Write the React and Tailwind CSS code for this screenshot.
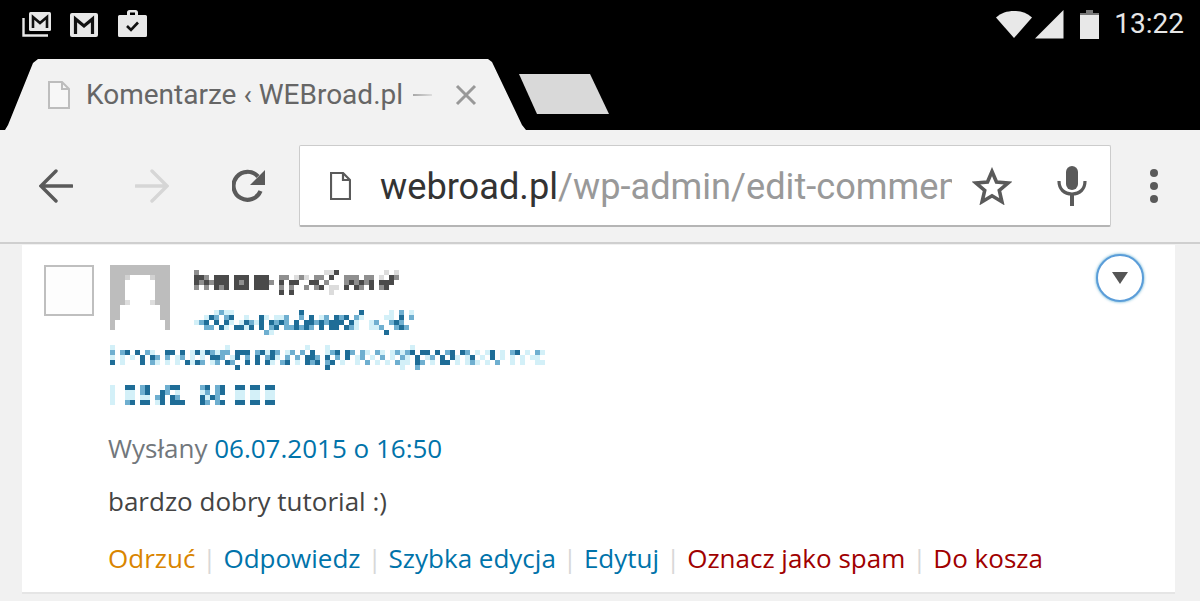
const sans = { fontFamily: "Roboto, sans-serif" };

// censored author details, one char per 5px block: # dark, + mid, - light
const nameRows = [
  "+.........................--#.........-.-",
  "##+.###.###.###..++.-+-.++.#..+++.++.-.#+",
  "#+#+###.#+#.###+.#.##..##.+...+#+#+#.###",
  "+.+.#+#.###.###..+.+..+.+#.--.#.#+.#.+#.",
  ".................#.#.......-............",
];
const siteRows = [
  "....-+--.............#...........#.....-.+.-.",
  "..-#+.+#..-..#-.--+..+.#.-+.#+#.+-....--.#.+.",
  "-+#.#.#-.-#+-#.#+#+.#.##+#+###.#-..-+..+#+...",
  "..++.#-.##-#.#.+#.++#+#+.#.##.#+-..--+..+#+..",
  "..............+-......................#......",
];
const mailRows = [
  "-......................-...............-...-................-...........................",
  "+.+#.#.+-..##.#.-#-#+-++.###.+#-#+.-+.+.#..-+#.#+.+-.+-.-+-+#.##.#.+#.#+.-.-#.-.+#.-.+-.",
  "-.-.-.#.#+.+.-+.-.-.##+.-#.+.#.+#-.+.+.##+.#.+.#.-+.-.+.-.+-.#.-+.#.#-.-#.-.#.-.-.-.--.",
  "#.-...#.+-.-.-.#-#+.-+.#+..#.#.#-.+#.-.#+#.+#.-..-.+.-.-.+--.#+.-.##.-.-+-.-.+..-.-..--.",
  ".........................#.................#..............-..+..........................",
];
const ipRows = [
  "-..##.+#...+##....+#.+#..##.##.##",
  "-..--.+#..#+.-....-+.+#..--.--.--",
  "-..--.--.+#.#+....#-#+...--.--.--",
  "-..+#.##.-#.###...#+.+#..##.##.##",
];

const greys = { "#": "#4a4a4a", "+": "#8f8f8f", "-": "#dcdcdc" };
const blues = { "#": "#1f6d97", "+": "#6fafd0", "-": "#d3f0f8" };

function Mosaic({ rows, palette }) {
  const cols = Math.max(...rows.map((r) => r.length));
  return (
    <svg width={cols * 5} height={rows.length * 5} shapeRendering="crispEdges" className="block">
      {rows.map((row, y) =>
        row.split("").map((ch, x) =>
          palette[ch] ? <rect key={y + "-" + x} x={x * 5} y={y * 5} width="5" height="5" fill={palette[ch]} /> : null
        )
      )}
    </svg>
  );
}

function GmailStack() {
  return (
    <svg width="30" height="30" viewBox="0 0 30 30">
      <path d="M1.500 9v17.500H26" fill="none" stroke="#e8e8e8" strokeWidth="2.400" />
      <rect x="7" y="3" width="22" height="19" rx="1.500" fill="#e8e8e8" />
      <path d="M11 19V8l7 6 7-6v11" fill="none" stroke="#111" strokeWidth="2.600" />
    </svg>
  );
}

function Gmail() {
  return (
    <svg width="28" height="30" viewBox="0 0 28 30">
      <rect x="0" y="4" width="28" height="24" rx="2" fill="#e8e8e8" />
      <path d="M5.500 25V10l8.500 7 8.500-7v15" fill="none" stroke="#111" strokeWidth="3.200" />
    </svg>
  );
}

function Briefcase() {
  return (
    <svg width="29" height="30" viewBox="0 0 29 30">
      <path d="M9 6V3.500C9 2 10 1 11.500 1h6C19 1 20 2 20 3.500V6h7.500A1.500 1.500 0 0 1 29 7.500v19a1.500 1.500 0 0 1-1.500 1.500h-26A1.500 1.500 0 0 1 0 26.500v-19A1.500 1.500 0 0 1 1.500 6zm3 0h5V3.500h-5z" fill="#e8e8e8" fillRule="evenodd" />
      <path d="M9 17l4 4 7-7.500" fill="none" stroke="#111" strokeWidth="2.600" />
    </svg>
  );
}

function StatusBar() {
  return (
    <div className="h-[59px] bg-black flex items-start justify-between pl-[22px] pr-[16px] pt-[9px]">
      <div className="flex items-center gap-[18px] h-[30px]">
        <GmailStack />
        <Gmail />
        <div className="ml-[2px]"><Briefcase /></div>
      </div>
      <div className="flex items-center h-[30px]">
        <svg width="36" height="28" viewBox="0 0 36 28" className="mr-[3px]">
          <path d="M0 7.500C5 3 11 1 18 1s13 2 18 6.500L18 28z" fill="#e8e8e8" />
        </svg>
        <svg width="29" height="29" viewBox="0 0 29 29" className="mr-[16px]">
          <path d="M0 28.500L28.500 0v28.500z" fill="#e8e8e8" />
        </svg>
        <svg width="19" height="29" viewBox="0 0 19 29" className="mr-[15px]">
          <path d="M6 0h7v3h6v26H0V3h6z" fill="#e8e8e8" />
          <path d="M6 0h7v3h6v2H0V3h6z" fill="#777" />
        </svg>
        <span className="text-[28px] leading-[30px] text-[#e6e6e6]" style={sans}>13:22</span>
      </div>
    </div>
  );
}

function TabStrip() {
  return (
    <div className="h-[71px] bg-black flex items-start">
      <div className="w-[526px] h-[71px] bg-[#f2f2f2] [clip-path:polygon(5px_71px,8px_66px,33px_4px,38px_0,488px_0,492px_3px,522px_66px,526px_71px)] flex items-center pl-[48px] pt-[1px]" style={sans}>
        <svg width="22" height="28" viewBox="0 0 22 28" fill="#f7f7f7" stroke="#bdbdbd" strokeWidth="2" className="shrink-0">
          <path d="M1 1h13l7 7v19H1z" />
          <path d="M14 1v7h7" fill="none" />
        </svg>
        <span className="ml-[16px] text-[28px] text-[#666666] whitespace-nowrap">Komentarze ‹ WEBroad.pl</span>
        <div className="ml-[10px] w-[19px] h-[2px] bg-gradient-to-r from-[#a8a8a8] to-[#dddddd]" />
        <svg width="22" height="22" viewBox="0 0 22 22" stroke="#999999" strokeWidth="3" className="ml-[23px] shrink-0">
          <path d="M2 2l18 18M20 2L2 20" />
        </svg>
      </div>
      <div className="ml-[-7px] mt-[15px] w-[90px] h-[40px] bg-[#d9d9d9] [clip-path:polygon(0_0,71px_0,90px_40px,18px_40px)]" />
    </div>
  );
}

function Toolbar() {
  return (
    <div className="h-[114px] bg-[#f2f2f2] border-b-2 border-[#cfcfcf] flex items-center pl-[39px]">
      <svg width="34" height="34" viewBox="0 0 34 34" fill="none" stroke="#5a5a5a" strokeWidth="3.400" strokeLinecap="round">
        <path d="M33 17H3M17 2L2 17l15 15" />
      </svg>
      <svg width="34" height="34" viewBox="0 0 34 34" fill="none" stroke="#d6d6d6" strokeWidth="3.400" strokeLinecap="round" className="ml-[62px]">
        <path d="M1 17h30M17 2l15 15-15 15" />
      </svg>
      <svg width="34" height="34" viewBox="0 0 34 34" fill="none" className="ml-[63px]">
        <path d="M28.500 22a14 14 0 1 1-2.500-14.500" stroke="#5a5a5a" strokeWidth="4.200" />
        <path d="M33 1v15H18z" fill="#5a5a5a" />
      </svg>
      <div className="ml-[33px] w-[812px] h-[82px] shrink-0 bg-white rounded-[2px] border border-[#cccccc] border-b-2 border-b-[#b5b5b5] flex items-center pl-[30px]" style={sans}>
        <svg width="21" height="28" viewBox="0 0 21 28" fill="#ffffff" stroke="#5a5a5a" strokeWidth="2.200" className="shrink-0">
          <path d="M1 1h12l7 7v19H1z" />
          <path d="M13 1v7h7" fill="none" />
        </svg>
        <div className="ml-[29px] w-[572px] pt-[2px] overflow-hidden whitespace-nowrap text-[36.200px] leading-[44px]">
          <span className="text-[#333333]">webroad.pl</span>
          <span className="text-[#999999]">/wp-admin/edit-comments.php</span>
        </div>
        <svg width="40" height="38" viewBox="0 0 40 38" fill="none" stroke="#5a5a5a" strokeWidth="3.600" className="ml-[20px] shrink-0">
          <path d="M20 4.500l4.500 10.500 11.500 1-8.700 7.500 2.600 11.200L20 28.800l-9.900 5.900 2.600-11.200L4 16l11.500-1z" />
        </svg>
        <svg width="30" height="40" viewBox="0 0 30 40" className="ml-[45px] shrink-0">
          <rect x="9" y="0" width="12" height="24" rx="6" fill="#5a5a5a" />
          <path d="M2 15c0 8 5 13 13 13s13-5 13-13" fill="none" stroke="#5a5a5a" strokeWidth="3.200" />
          <rect x="13" y="27" width="4" height="13" fill="#5a5a5a" />
        </svg>
      </div>
      <div className="ml-[39px] flex flex-col gap-[5px]">
        <div className="w-[8px] h-[8px] rounded-full bg-[#5a5a5a]" />
        <div className="w-[8px] h-[8px] rounded-full bg-[#5a5a5a]" />
        <div className="w-[8px] h-[8px] rounded-full bg-[#5a5a5a]" />
      </div>
    </div>
  );
}

function Avatar() {
  return (
    <svg width="60" height="65" viewBox="0 0 60 65" shapeRendering="crispEdges" className="block shrink-0">
      <rect width="60" height="65" fill="#bdbdbd" />
      <path d="M20 10h20v5h5v20h-5v5h10v15h5v10H5V55h5V40h10v-5h-5V15h5z" fill="#ffffff" />
      <rect x="15" y="35" width="5" height="5" fill="#dddddd" />
      <rect x="40" y="35" width="5" height="5" fill="#dddddd" />
      <rect x="15" y="10" width="5" height="5" fill="#d2d2d2" />
      <rect x="40" y="10" width="5" height="5" fill="#d2d2d2" />
    </svg>
  );
}

function Sep() {
  return <span className="mx-[6.900px] text-[#d8d8d8]">|</span>;
}

function CommentCard() {
  return (
    <div className="relative mx-[22px] w-[1153px] h-[349px] bg-white border-b-2 border-[#e5e5e5] pl-[22px] pt-[20px] flex items-start" style={{ fontFamily: '"Open Sans", sans-serif' }}>
      <div className="w-[50px] h-[51px] bg-[#fdfdfd] border-2 border-[#bfbfbf] shrink-0" />
      <div className="ml-[14px]">
        <div className="ml-[2px] flex items-start">
          <Avatar />
          <div className="ml-[24px] pt-[5px]">
            <Mosaic rows={nameRows} palette={greys} />
            <div className="mt-[15px]">
              <Mosaic rows={siteRows} palette={blues} />
            </div>
          </div>
        </div>
        <div className="ml-[2px] mt-[10px]">
          <Mosaic rows={mailRows} palette={blues} />
        </div>
        <div className="ml-[2px] mt-[15px]">
          <Mosaic rows={ipRows} palette={blues} />
        </div>
        <p className="mt-[25px] text-[26px] leading-[36px] whitespace-nowrap text-[#72777c]">
          Wysłany <span className="text-[#0073aa]">06.07.2015 o 16:50</span>
        </p>
        <p className="mt-[17px] text-[26px] leading-[36px] whitespace-nowrap text-[#444444]">bardzo dobry tutorial :)</p>
        <p className="mt-[21px] text-[26px] leading-[36px] whitespace-nowrap">
          <span className="text-[#d98500]">Odrzuć</span><Sep />
          <span className="text-[#0073aa]">Odpowiedz</span><Sep />
          <span className="text-[#0073aa]">Szybka edycja</span><Sep />
          <span className="text-[#0073aa]">Edytuj</span><Sep />
          <span className="text-[#a00000]">Oznacz jako spam</span><Sep />
          <span className="text-[#a00000]">Do kosza</span>
        </p>
      </div>
      <div className="absolute left-[1074px] top-[9px] w-[48px] h-[48px] rounded-full bg-white border-2 border-[#5b9dd9] shadow-[0_0_3px_rgba(30,140,190,0.8)] flex items-center justify-center">
        <svg width="16" height="12" viewBox="0 0 16 12"><path d="M0 0h16L8 12z" fill="#555555" /></svg>
      </div>
    </div>
  );
}

export default function App() {
  return (
    <div className="w-[1200px] h-[601px] overflow-hidden bg-[#f1f1f1]">
      <StatusBar />
      <TabStrip />
      <Toolbar />
      <div className="pt-[1px]">
        <CommentCard />
      </div>
    </div>
  );
}
